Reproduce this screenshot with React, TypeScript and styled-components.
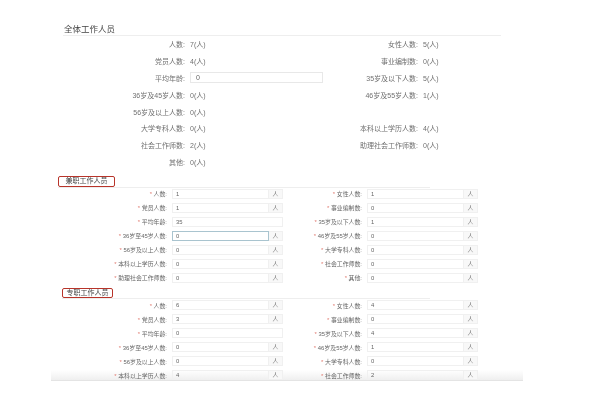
import React from "react";
import styled, { createGlobalStyle } from "styled-components";

const GlobalStyle = createGlobalStyle`
  html, body {
    margin: 0;
    padding: 0;
    background: #fff;
    overflow: hidden;
  }
  body {
    font-family: "Liberation Sans", "Noto Sans CJK SC", sans-serif;
  }
`;

const Page = styled.div`
  width: 600px;
  height: 407px;
  background: #fff;
  filter: blur(0.45px);
`;

const Sheet = styled.main`
  position: relative;
  isolation: isolate;
  width: 472px;
  height: 381px;
  margin-left: 51px;
  padding-top: 24px;
  box-sizing: border-box;
  overflow: hidden;
  border-bottom: 1px solid #e4e4e4;
`;

const Fade = styled.div`
  position: absolute;
  z-index: -1;
  left: 0;
  right: 0;
  bottom: 0;
  height: 10px;
  background: linear-gradient(rgba(235, 235, 235, 0), rgba(235, 235, 235, 0.8));
`;

const Title = styled.h3`
  margin: 0 0 0 12px;
  padding-left: 1px;
  width: 437px;
  height: 11px;
  font-size: 8.5px;
  line-height: 10px;
  font-weight: normal;
  color: #444;
  border-bottom: 1px solid #eee;
`;

const SummaryGrid = styled.div`
  display: grid;
  grid-template-columns: 261px 177px;
  grid-auto-rows: 16.8px;
  margin-left: 11px;
`;

const SummaryField = styled.div<{ $labelWidth: number }>`
  display: grid;
  grid-template-columns: ${(p) => p.$labelWidth}px 1fr;
  column-gap: 5px;
  align-items: center;
  font-size: 7px;
  color: #707070;
`;

const SummaryLabel = styled.span`
  text-align: right;
  white-space: nowrap;
`;

const AgeBox = styled.div`
  width: 133px;
  height: 11px;
  line-height: 10px;
  padding-left: 5px;
  box-sizing: border-box;
  border: 1px solid #e8e8e8;
  color: #666;
`;

const SectionHead = styled.div<{ $left: number; $top: number; $lineWidth: number }>`
  width: ${(p) => p.$lineWidth}px;
  margin: ${(p) => p.$top}px 0 0 ${(p) => p.$left}px;
  border-bottom: 1px solid #eee;
`;

const SectionTag = styled.span<{ $width: number }>`
  display: block;
  box-sizing: border-box;
  width: ${(p) => p.$width}px;
  height: 10.5px;
  line-height: 8.5px;
  font-size: 7px;
  text-align: center;
  color: #444;
  border: 1px solid #b8342a;
  border-radius: 2px;
`;

const FormGrid = styled.div`
  display: grid;
  grid-template-columns: 195px 194px;
  grid-auto-rows: 14px;
  margin-top: -1px;
  padding-left: 8px;
`;

const FormField = styled.div`
  display: grid;
  grid-template-columns: 108px 111px;
  column-gap: 5px;
  align-items: center;
  height: 14px;
  font-size: 5.9px;
  color: #666;
`;

const FormLabel = styled.span`
  text-align: right;
  white-space: nowrap;
  &::before {
    content: "* ";
    color: #e0796f;
  }
`;

const InputGroup = styled.div`
  display: flex;
  height: 10px;
  width: 100%;
`;

const ValueBox = styled.div<{ $focused?: boolean }>`
  flex: 1;
  box-sizing: border-box;
  line-height: 8px;
  padding-left: 3px;
  border: 1px solid ${(p) => (p.$focused ? "#a9c4cf" : "#f0f0f0")};
  color: #666;
`;

const Unit = styled.div`
  width: 14px;
  box-sizing: border-box;
  line-height: 8px;
  text-align: center;
  background: #f8f8f8;
  border: 1px solid #f0f0f0;
  border-left: none;
  color: #777;
`;

type Item = { label: string; value: string; age?: boolean };
type FormItem = { label: string; value: string; noUnit?: boolean; focused?: boolean };

const summary: (Item | null)[] = [
  { label: "人数:", value: "7(人)" },
  { label: "女性人数:", value: "5(人)" },
  { label: "党员人数:", value: "4(人)" },
  { label: "事业编制数:", value: "0(人)" },
  { label: "平均年龄:", value: "0", age: true },
  { label: "35岁及以下人数:", value: "5(人)" },
  { label: "36岁及45岁人数:", value: "0(人)" },
  { label: "46岁及55岁人数:", value: "1(人)" },
  { label: "56岁及以上人数:", value: "0(人)" },
  null,
  { label: "大学专科人数:", value: "0(人)" },
  { label: "本科以上学历人数:", value: "4(人)" },
  { label: "社会工作师数:", value: "2(人)" },
  { label: "助理社会工作师数:", value: "0(人)" },
  { label: "其他:", value: "0(人)" },
];

const partTime: FormItem[] = [
  { label: "人数:", value: "1" },
  { label: "女性人数:", value: "1" },
  { label: "党员人数:", value: "1" },
  { label: "事业编制数:", value: "0" },
  { label: "平均年龄:", value: "35", noUnit: true },
  { label: "35岁及以下人数:", value: "1" },
  { label: "36岁至45岁人数:", value: "0", focused: true },
  { label: "46岁及55岁人数:", value: "0" },
  { label: "56岁及以上人数:", value: "0" },
  { label: "大学专科人数:", value: "0" },
  { label: "本科以上学历人数:", value: "0" },
  { label: "社会工作师数:", value: "0" },
  { label: "助理社会工作师数:", value: "0" },
  { label: "其他:", value: "0" },
];

const fullTime: FormItem[] = [
  { label: "人数:", value: "6" },
  { label: "女性人数:", value: "4" },
  { label: "党员人数:", value: "3" },
  { label: "事业编制数:", value: "0" },
  { label: "平均年龄:", value: "0", noUnit: true },
  { label: "35岁及以下人数:", value: "4" },
  { label: "36岁至45岁人数:", value: "0" },
  { label: "46岁及55岁人数:", value: "1" },
  { label: "56岁及以上人数:", value: "0" },
  { label: "大学专科人数:", value: "0" },
  { label: "本科以上学历人数:", value: "4" },
  { label: "社会工作师数:", value: "2" },
];

const renderForm = (items: FormItem[]) =>
  items.map((item) => (
    <FormField key={item.label}>
      <FormLabel>{item.label}</FormLabel>
      <InputGroup>
        <ValueBox $focused={item.focused}>{item.value}</ValueBox>
        {!item.noUnit && <Unit>人</Unit>}
      </InputGroup>
    </FormField>
  ));

const App: React.FC = () => {
  return (
    <Page>
      <GlobalStyle />
      <Sheet>
        <Fade />
        <Title>全体工作人员</Title>
        <SummaryGrid>
          {summary.map((item, i) =>
            item ? (
              <SummaryField key={item.label} $labelWidth={i % 2 === 0 ? 123 : 95}>
                <SummaryLabel>{item.label}</SummaryLabel>
                {item.age ? <AgeBox>{item.value}</AgeBox> : <span>{item.value}</span>}
              </SummaryField>
            ) : (
              <div key="blank" />
            )
          )}
        </SummaryGrid>
        <SectionHead $left={7} $top={6} $lineWidth={372}>
          <SectionTag $width={57}>兼职工作人员</SectionTag>
        </SectionHead>
        <FormGrid>{renderForm(partTime)}</FormGrid>
        <SectionHead $left={11} $top={3} $lineWidth={368}>
          <SectionTag $width={51}>专职工作人员</SectionTag>
        </SectionHead>
        <FormGrid>{renderForm(fullTime)}</FormGrid>
      </Sheet>
    </Page>
  );
};

export default App;
